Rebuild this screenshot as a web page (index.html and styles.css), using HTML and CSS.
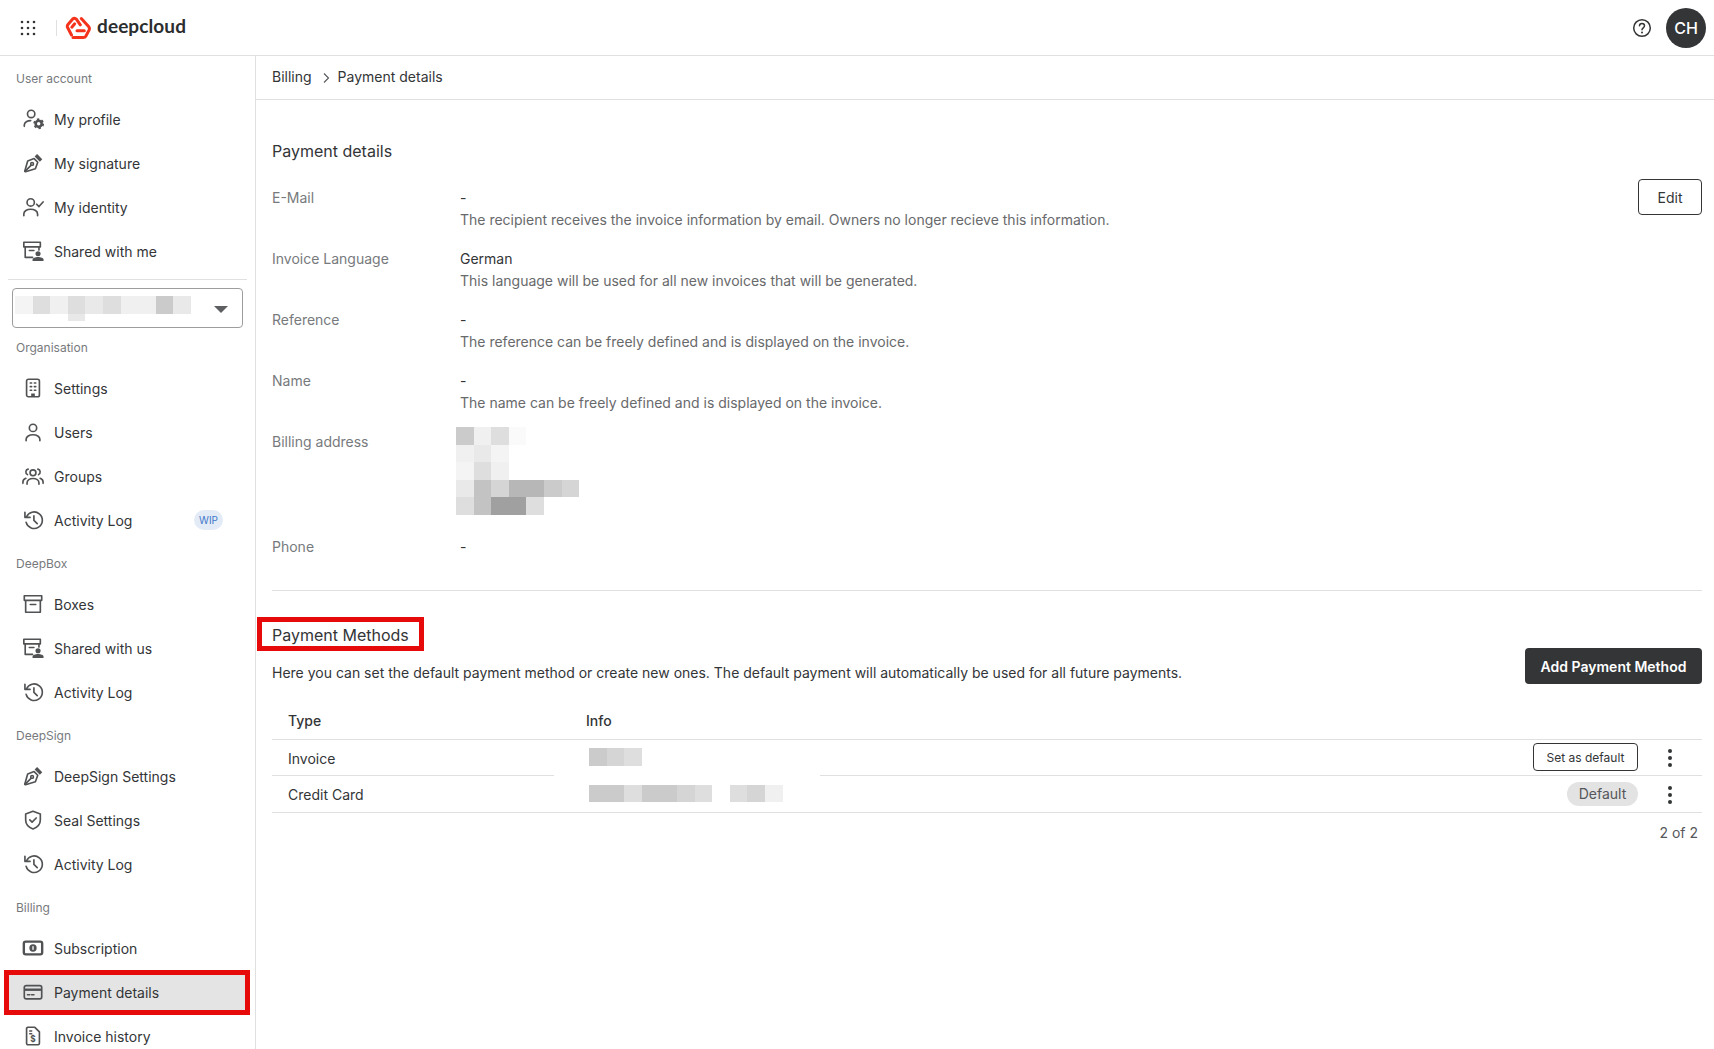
FILE: index.html
```html
<!DOCTYPE html>
<html lang="en">
<head>
<meta charset="utf-8">
<title>Payment details</title>
<link rel="stylesheet" href="styles.css">
</head>
<body>
<svg class="defs" width="0" height="0" aria-hidden="true">
  <symbol id="i-history" viewBox="0 0 24 24"><path d="M3.200 3.600v5.600h5.600" class="s"/><path d="M3.600 9a9 9 0 1 1-.3 5.600" class="s" transform="translate(1.200 0)"/><path d="M13 7.500v5l3.600 3.400" class="s"/></symbol>
  <symbol id="i-pen" viewBox="0 0 24 24"><path d="M3 21l3.200-11.200 7-2.600 4 4-2.600 7L3.800 21.500z" class="s"/><path d="M3.500 20.800l6.300-6.300" class="s"/><circle cx="11" cy="13" r="1.500" class="s"/><path d="M13.800 4.800l2.700-2.600 5.600 5.600-2.600 2.700z" class="f"/></symbol>
  <symbol id="i-shared" viewBox="0 0 24 24"><path d="M2 2.500h18v5H2z" class="s"/><path d="M3.500 7.500V19h8M18.500 7.500v3.500M8 11.500h5" class="s"/><circle cx="17.500" cy="15" r="2.800" class="f"/><path d="M11.500 23v-1.500c0-2 3-3 6-3s6 1 6 3V23z" class="f"/></symbol>
  <symbol id="i-person" viewBox="0 0 24 24"><circle cx="12" cy="7.500" r="4" class="s"/><path d="M4.500 21.500v-1.500c0-3 3.500-5 7.500-5s7.500 2 7.500 5v1.500" class="s"/></symbol>
</svg>

<header class="topbar">
  <div class="brand">
    <svg class="apps" viewBox="0 0 16 16" aria-hidden="true">
      <g class="dark"><circle cx="2" cy="2" r="1.300"/><circle cx="8" cy="2" r="1.300"/><circle cx="14" cy="2" r="1.300"/><circle cx="2" cy="8" r="1.300"/><circle cx="8" cy="8" r="1.300"/><circle cx="14" cy="8" r="1.300"/><circle cx="2" cy="14" r="1.300"/><circle cx="8" cy="14" r="1.300"/><circle cx="14" cy="14" r="1.300"/></g>
    </svg>
    <span class="brand-sep"></span>
    <svg class="logo" viewBox="4 4 26 24" aria-hidden="true">
      <path d="M10.500 23L6.600 15.500Q5.800 13.800 7 12.400L11.700 7Q13.700 5.400 15.500 7.300L19.300 12.800" class="lg"/>
      <path d="M20.300 6.500L27.800 14.800Q29 16.500 27.900 18.400L24.800 24.200Q24 25.600 22.200 25.600H12" class="lg"/>
      <path d="M10.800 15.200L13.700 11.800" class="lg"/>
      <path d="M16 18.800H23.300" class="lg"/>
    </svg>
    <span class="wordmark">deepcloud</span>
  </div>
  <div class="top-actions">
    <svg class="help" viewBox="0 0 20 20" aria-hidden="true"><circle cx="10" cy="10" r="8.300"/><path d="M7.500 7.800c0-3.200 5-3.200 5 0 0 2-2.500 2-2.500 4"/><circle class="help-dot" cx="10" cy="14.400" r="1"/></svg>
    <span class="avatar">CH</span>
  </div>
</header>

<div class="shell">
  <nav class="sidebar">
    <div class="section-label first">User account</div>
    <a class="item"><svg class="ico" viewBox="0 0 24 24"><circle cx="10" cy="6.500" r="4" class="s"/><path d="M2.500 20v-1.500c0-3 3.500-4.800 7-4.800" class="s"/><circle cx="18.200" cy="17.200" r="3.300" class="gear"/><circle cx="18.200" cy="17.200" r="5" class="teeth"/></svg><span>My profile</span></a>
    <a class="item"><svg class="ico"><use href="#i-pen"/></svg><span>My signature</span></a>
    <a class="item"><svg class="ico" viewBox="0 0 24 24"><circle cx="9.500" cy="7" r="4" class="s"/><path d="M2 21.500v-2c0-3 3.500-5 7.500-5s7.500 2 7.500 5v2" class="s"/><path d="M16 9l2.500 2.500L23 6.500" class="s"/></svg><span>My identity</span></a>
    <a class="item"><svg class="ico"><use href="#i-shared"/></svg><span>Shared with me</span></a>
    <div class="side-rule"></div>
    <div class="org-select">
      <div class="blur-strip">
        <i class="c g2"></i><i class="c g5"></i><i class="c g3"></i><i class="c g5 tail"></i><i class="c g4"></i><i class="c g5"></i><i class="c g3"></i><i class="c g3"></i><i class="c g7"></i><i class="c g4"></i>
      </div>
      <span class="caret"></span>
    </div>
    <div class="section-label org">Organisation</div>
    <a class="item"><svg class="ico" viewBox="0 0 24 24"><rect x="5" y="2.500" width="14" height="19" rx="2" class="s"/><path d="M9 6.500h1.500M13.500 6.500H15M9 10.500h1.500M13.500 10.500H15M9 14.500h1.500M13.500 14.500H15" class="s"/><path d="M10 21.500v-3.500h4v3.500z" class="f"/></svg><span>Settings</span></a>
    <a class="item"><svg class="ico"><use href="#i-person"/></svg><span>Users</span></a>
    <a class="item"><svg class="ico" viewBox="0 0 24 24"><circle cx="12" cy="8.500" r="3.200" class="s"/><path d="M5.500 21v-1.500c0-3 3-4.800 6.500-4.800s6.500 1.800 6.500 4.800V21" class="s"/><path d="M6.700 4.500a3.200 3.200 0 0 0-.7 6M17.300 4.500a3.200 3.200 0 0 1 .7 6M1 20v-1.500c0-2 1.400-3.300 3.200-4M23 20v-1.500c0-2-1.400-3.300-3.200-4" class="s"/></svg><span>Groups</span></a>
    <a class="item"><svg class="ico"><use href="#i-history"/></svg><span>Activity Log</span><em class="wip">WIP</em></a>
    <div class="section-label">DeepBox</div>
    <a class="item"><svg class="ico" viewBox="0 0 24 24"><path d="M2.500 3h19v5h-19zM4 8v13h16V8M9 12.500h6" class="s"/></svg><span>Boxes</span></a>
    <a class="item"><svg class="ico"><use href="#i-shared"/></svg><span>Shared with us</span></a>
    <a class="item"><svg class="ico"><use href="#i-history"/></svg><span>Activity Log</span></a>
    <div class="section-label">DeepSign</div>
    <a class="item"><svg class="ico"><use href="#i-pen"/></svg><span>DeepSign Settings</span></a>
    <a class="item"><svg class="ico" viewBox="0 0 24 24"><path d="M12 2.500l8 3v6.500c0 4.800-3.300 8-8 9.800-4.700-1.800-8-5-8-9.800V5.500z" class="s"/><path d="M8.500 11.800l2.500 2.500 4.500-4.500" class="s"/></svg><span>Seal Settings</span></a>
    <a class="item"><svg class="ico"><use href="#i-history"/></svg><span>Activity Log</span></a>
    <div class="section-label">Billing</div>
    <a class="item"><svg class="ico" viewBox="0 0 24 24"><rect x="2" y="5" width="20" height="14" rx="2" class="thick"/><circle cx="12" cy="12" r="4" class="f"/><rect x="11.300" y="10" width="1.400" height="4" fill="#fff"/></svg><span>Subscription</span></a>
    <a class="item active"><svg class="ico" viewBox="0 0 24 24"><rect x="2.500" y="5" width="19" height="14.500" rx="2" class="s"/><path d="M2.500 9.500h19" class="thick"/><path d="M6 15h2.500M10.500 15H13" class="s"/></svg><span>Payment details</span></a>
    <a class="item"><svg class="ico" viewBox="0 0 24 24"><path d="M6 2.500h8l5 5V20a1.500 1.500 0 0 1-1.500 1.500h-11A1.500 1.500 0 0 1 5 20V3.500z" class="s"/><path d="M8.500 6.500h2M8.500 9.500h2" class="s"/><text x="12" y="18.500" class="dollar">$</text></svg><span>Invoice history</span></a>
  </nav>

  <main class="main">
    <div class="crumbs">
      <span>Billing</span>
      <svg class="chev" viewBox="0 0 8 12" aria-hidden="true"><path d="M2 1.500L6.500 6 2 10.500"/></svg>
      <span>Payment details</span>
    </div>
    <div class="content">
      <h2 class="title">Payment details</h2>
      <div class="details">
        <div class="row">
          <div class="label">E-Mail</div>
          <div><div class="value">-</div><div class="desc">The recipient receives the invoice information by email. Owners no longer recieve this information.</div></div>
          <button class="btn-edit">Edit</button>
        </div>
        <div class="row">
          <div class="label">Invoice Language</div>
          <div><div class="value">German</div><div class="desc">This language will be used for all new invoices that will be generated.</div></div>
        </div>
        <div class="row">
          <div class="label">Reference</div>
          <div><div class="value">-</div><div class="desc">The reference can be freely defined and is displayed on the invoice.</div></div>
        </div>
        <div class="row">
          <div class="label">Name</div>
          <div><div class="value">-</div><div class="desc">The name can be freely defined and is displayed on the invoice.</div></div>
        </div>
        <div class="row">
          <div class="label">Billing address</div>
          <div class="addr">
            <div class="blur-strip"><i class="c g7"></i><i class="c g3"></i><i class="c g5"></i><i class="c g1"></i></div>
            <div class="blur-strip"><i class="c g3"></i><i class="c g4"></i><i class="c g2"></i></div>
            <div class="blur-strip"><i class="c g2"></i><i class="c g5"></i><i class="c g3"></i></div>
            <div class="blur-strip"><i class="c g4"></i><i class="c g8"></i><i class="c g6"></i><i class="c g9"></i><i class="c g9"></i><i class="c g7"></i><i class="c g6"></i></div>
            <div class="blur-strip"><i class="c g5"></i><i class="c g8"></i><i class="c g10"></i><i class="c g10"></i><i class="c g5"></i></div>
          </div>
        </div>
        <div class="row">
          <div class="label">Phone</div>
          <div class="value">-</div>
        </div>
      </div>
      <hr class="rule">
      <h2 class="title marked">Payment Methods</h2>
      <div class="intro">
        <p>Here you can set the default payment method or create new ones. The default payment will automatically be used for all future payments.</p>
        <button class="btn-add">Add Payment Method</button>
      </div>
      <table class="methods">
        <thead>
          <tr><th class="col-type">Type</th><th class="col-info">Info</th><th class="col-act"></th><th class="col-more"></th></tr>
        </thead>
        <tbody>
          <tr>
            <td class="col-type">Invoice</td>
            <td class="col-info masked"><div class="blur-strip"><i class="c g7"></i><i class="c g6"></i><i class="c g5"></i></div></td>
            <td class="col-act"><button class="btn-default">Set as default</button></td>
            <td class="col-more"><span class="dots"><i></i><i></i><i></i></span></td>
          </tr>
          <tr>
            <td class="col-type">Credit Card</td>
            <td class="col-info masked"><div class="blur-strip"><i class="c g7"></i><i class="c g7"></i><i class="c g5"></i><i class="c g7"></i><i class="c g7"></i><i class="c g6"></i><i class="c g5"></i><i class="c gap"></i><i class="c g5"></i><i class="c g6"></i><i class="c g3"></i></div></td>
            <td class="col-act"><span class="chip">Default</span></td>
            <td class="col-more"><span class="dots"><i></i><i></i><i></i></span></td>
          </tr>
        </tbody>
      </table>
      <div class="count">2 of 2</div>
    </div>
  </main>
</div>
</body>
</html>
```
FILE: styles.css
```css
* { box-sizing: border-box; }
html, body { margin: 0; height: 100%; overflow: hidden; }
body { font-family: Inter, "Liberation Sans", sans-serif; font-size: 14px; line-height: 22px; color: #333537; background: #fff; }
.defs { position: absolute; }
.s { fill: none; stroke: #505254; stroke-width: 1.800; stroke-linecap: round; stroke-linejoin: round; }
.thick { fill: none; stroke: #505254; stroke-width: 2.600; }
.f { fill: #505254; }
.gear { fill: none; stroke: #505254; stroke-width: 2.800; }
.teeth { fill: none; stroke: #505254; stroke-width: 1.800; stroke-dasharray: 2.600 2.640; }
.dollar { font-size: 9px; font-weight: 700; text-anchor: middle; fill: #505254; font-family: Inter, sans-serif; }

.topbar { height: 56px; display: flex; align-items: center; justify-content: space-between; border-bottom: 1px solid #e0e0e0; padding: 0 8px 0 20px; }
.brand { display: flex; align-items: center; }
.apps { width: 16px; height: 16px; }
.dark { fill: #333537; }
.brand-sep { width: 1px; height: 16px; background: #e0e0e0; margin: 0 8px 0 20px; }
.logo { width: 26px; height: 24px; margin-right: 6px; }
.lg { fill: none; stroke: #f5331c; stroke-width: 3; stroke-linecap: round; stroke-linejoin: round; }
.wordmark { font-family: Lato, Inter, sans-serif; font-size: 19px; font-weight: 700; color: #2b2d2f; line-height: 24px; margin-top: -3px; letter-spacing: .1px; }
.top-actions { display: flex; align-items: center; gap: 14px; }
.help { width: 20px; height: 20px; fill: none; stroke: #333537; stroke-width: 1.500; stroke-linecap: round; }
.help-dot { fill: #333537; stroke: none; }
.avatar { width: 40px; height: 40px; border-radius: 50%; background: #333537; color: #fff; font-size: 16px; font-weight: 500; display: flex; align-items: center; justify-content: center; }

.shell { display: flex; height: calc(100vh - 56px); }
.sidebar { width: 256px; flex: none; border-right: 1px solid #e0e0e0; overflow: hidden; }
.section-label { font-size: 12px; line-height: 18px; color: #777a7d; padding: 13px 16px 9px; }
.section-label.first { padding-top: 14px; }
.section-label.org { padding-top: 11px; }
.item { display: flex; align-items: center; height: 44px; padding-left: 22px; color: #333537; position: relative; margin: 0 9px 0 0; }
.item span { margin: 1px 0 0 10px; }
.item.active { background: #e4e4e4; margin-left: 9px; margin-right: 10px; padding-left: 13px; outline: 5px solid #e60a0a; outline-offset: 0; height: 35px; margin-top: 4.500px; margin-bottom: 4.500px; }
.ico { width: 22px; height: 22px; flex: none; }
.wip { position: absolute; left: 194px; top: 12px; width: 29px; height: 20px; border-radius: 10px; background: #e3ebf7; color: #3f78c9; font-size: 10px; line-height: 20px; font-style: normal; text-align: center; }
.side-rule { height: 1px; background: #e0e0e0; margin: 6px 8px 0; }
.org-select { height: 40px; margin: 8px 12px 0; border: 1px solid #9b9d9f; border-radius: 4px; position: relative; }
.org-select .blur-strip { position: absolute; left: 2px; top: 7px; }
.caret { position: absolute; right: 14px; top: 17px; border: 7px solid transparent; border-top: 7px solid #5d5f61; border-bottom: 0; }

.blur-strip { display: flex; }
.c { display: block; width: 17.600px; height: 17.600px; flex: none; position: relative; }
.c.tail::after { content: ""; position: absolute; left: 0; top: 100%; width: 100%; height: 7px; background: #e8e8e8; }
.g1 { background: #fafafa; } .g2 { background: #f4f4f4; } .g3 { background: #f0f0f0; } .g4 { background: #e9e9e9; } .g5 { background: #dedede; }
.g6 { background: #d5d5d5; } .g7 { background: #cbcbcb; } .g8 { background: #c3c3c3; } .g9 { background: #b7b7b7; } .g10 { background: #a0a0a0; }
.gap { background: transparent; }

.main { flex: 1; min-width: 0; }
.crumbs { height: 44px; display: flex; align-items: center; border-bottom: 1px solid #e0e0e0; padding: 0 0 1px 16px; }
.chev { width: 8px; height: 12px; margin: 1px 8px 0 10px; fill: none; stroke: #55575a; stroke-width: 1.100; }
.content { padding: 0 12px 0 16px; }
.title { margin: 39px 0 0; font-size: 16px; font-weight: 400; line-height: 24px; color: #333537; }
.details { margin-top: 24px; }
.row { display: grid; grid-template-columns: 188px 1fr; position: relative; margin-bottom: 17px; }
.label { color: #777a7d; }
.value { color: #333537; }
.desc { color: #68696b; }
.btn-edit { position: absolute; right: 0; top: -8px; width: 64px; height: 36px; background: #fff; border: 1px solid #333537; border-radius: 4px; font: 14px Inter, sans-serif; color: #333537; }
.addr { margin: -4px 0 4px -4px; height: 88px; }
.rule { border: 0; height: 1px; background: #e0e0e0; margin: 32px 0 0; }
.title.marked { display: inline-block; margin: 31px 0 0 -10px; padding: 0 10px; height: 24px; line-height: 26px; outline: 5px solid #e60a0a; vertical-align: top; }
.intro { display: flex; align-items: flex-start; justify-content: space-between; margin-top: 2px; height: 36px; }
.intro p { margin: 14px 0 0; color: #333537; }
.btn-add { width: 177px; height: 36px; background: #333537; color: #fff; border: 0; border-radius: 4px; font: 600 14px Inter, sans-serif; }
.methods { width: 100%; margin-top: 17px; border-collapse: collapse; table-layout: fixed; }
.methods th { height: 38px; padding: 2px 0 0; text-align: left; font-weight: 500; border-bottom: 1px solid #e0e0e0; color: #333537; }
.methods td { height: 36px; padding: 0; border-bottom: 1px solid #e0e0e0; }
.methods tr:last-child td { height: 37px; }
.methods td.col-type { padding-top: 3px; }
.col-type { width: 282px; padding-left: 16px !important; }
.col-info { width: 266px; padding-left: 32px !important; }
.methods th.col-info { padding-left: 32px !important; }
.methods td.masked { padding-left: 35px !important; border-bottom-color: transparent; }
.methods tr:last-child td.masked { border-bottom-color: #e0e0e0; }
.col-act { text-align: right; }
.col-more { width: 64px; text-align: center; }
.btn-default { width: 105px; height: 28px; background: #fff; border: 1px solid #333537; border-radius: 4px; font: 12px Inter, sans-serif; color: #333537; padding: 0; vertical-align: middle; }
.chip { display: inline-block; width: 71px; height: 24px; border-radius: 12px; background: #e3e3e3; text-align: center; line-height: 24px; vertical-align: middle; color: #55575a; }
.dots { display: inline-flex; flex-direction: column; gap: 3px; vertical-align: middle; }
.dots i { display: block; width: 4px; height: 4px; border-radius: 50%; background: #333537; }
.count { text-align: right; padding: 9px 4px 0 0; color: #55575a; }
```
